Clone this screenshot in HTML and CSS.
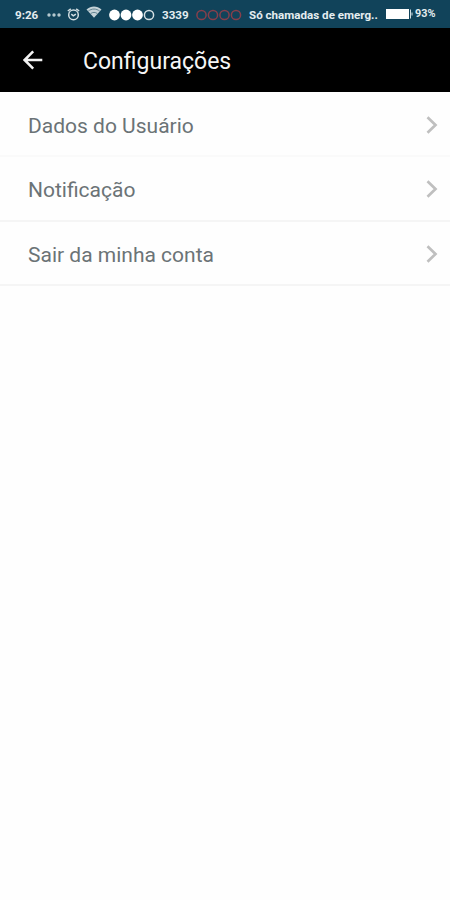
FILE: index.html
```html
<!DOCTYPE html>
<html lang="pt-BR">
<head>
  <meta charset="UTF-8">
  <meta name="viewport" content="width=device-width, initial-scale=1">
  <title>Configurações</title>
  <link rel="stylesheet" href="styles.css">
</head>
<body>
  <div class="status-bar">
    <span class="time">9:26</span>
    <svg class="more" width="14" height="4" viewBox="0 0 14 4">
      <circle cx="2" cy="2" r="1.7"/><circle cx="7" cy="2" r="1.7"/><circle cx="12" cy="2" r="1.7"/>
    </svg>
    <svg class="alarm" width="13" height="13" viewBox="0 0 13 13">
      <circle cx="6.5" cy="6.9" r="4.8"/>
      <path d="M4.3 6.2l2 1.6 2.6-1.6M0.8 3l3-2.2M12.2 3l-3-2.2"/>
    </svg>
    <svg class="wifi" width="16" height="12" viewBox="0 0 16 12">
      <path class="wifi-fill" d="M8 11.8L0.5 3.5C5 -0.4 11 -0.4 15.5 3.5z"/>
      <path class="wifi-gap" d="M2.2 5.2C5.8 2.3 10.2 2.3 13.8 5.2M4.6 7.6C6.7 6 9.3 6 11.4 7.6"/>
    </svg>
    <svg class="dots" width="46" height="12" viewBox="0 0 46 12">
      <circle class="on" cx="5.5" cy="6" r="5.4"/>
      <circle class="on" cx="17" cy="6" r="5.4"/>
      <circle class="on" cx="28.5" cy="6" r="5.4"/>
      <circle class="off" cx="40" cy="6" r="4.6"/>
    </svg>
    <span class="carrier">3339</span>
    <svg class="dots red" width="46" height="12" viewBox="0 0 46 12">
      <circle class="off" cx="5.5" cy="6" r="4.6"/>
      <circle class="off" cx="17" cy="6" r="4.6"/>
      <circle class="off" cx="28.5" cy="6" r="4.6"/>
      <circle class="off" cx="40" cy="6" r="4.6"/>
    </svg>
    <span class="emergency">Só chamadas de emerg..</span>
    <svg class="battery" width="27" height="10" viewBox="0 0 27 10">
      <rect x="0" y="0" width="23" height="10"/>
      <path d="M24.5 0.5v9M26 3.5v3"/>
    </svg>
    <span class="percent">93%</span>
  </div>

  <header class="header">
    <button class="back" aria-label="Voltar">
      <svg width="20" height="20" viewBox="0 0 20 20">
        <path d="M19.3 10H1.8M10.2 1.4L1.6 10l8.6 8.6"/>
      </svg>
    </button>
    <h1>Configurações</h1>
  </header>

  <ul class="menu">
    <li>
      <span>Dados do Usuário</span>
      <svg class="chevron" width="12" height="18" viewBox="0 0 12 18"><path d="M1.5 1.3L9.5 9l-8 7.7"/></svg>
    </li>
    <li>
      <span>Notificação</span>
      <svg class="chevron" width="12" height="18" viewBox="0 0 12 18"><path d="M1.5 1.3L9.5 9l-8 7.7"/></svg>
    </li>
    <li>
      <span>Sair da minha conta</span>
      <svg class="chevron" width="12" height="18" viewBox="0 0 12 18"><path d="M1.5 1.3L9.5 9l-8 7.7"/></svg>
    </li>
  </ul>
</body>
</html>
```

FILE: styles.css
```css
body {
  font-family: Roboto, sans-serif;
  margin: 0;
  background-color: #fefefe;
}
svg {
  display: block;
  flex-shrink: 0;
  fill: none;
}
.status-bar {
  display: flex;
  align-items: center;
  box-sizing: border-box;
  height: 28px;
  padding-left: 15px;
  background-color: #11435a;
  color: #e4edf0;
  font-size: 11.6px;
  font-weight: bold;
  white-space: nowrap;
}
.status-bar span {
  flex-shrink: 0;
  line-height: 14px;
  padding-top: 2px;
}
.time {
  width: 32px;
}
.more {
  margin: 1px 6px 0 0;
  fill: #b5c8cf;
}
.alarm {
  margin-right: 6px;
  stroke: #d3dfe3;
  stroke-width: 1.5;
}
.wifi {
  margin: 0 7px 4px 0;
}
.wifi-fill {
  fill: #c5d3d8;
}
.wifi-gap {
  stroke: #4a7080;
  stroke-width: 0.8;
}
.dots {
  margin: 1px 7px 0 0;
}
.dots .on {
  fill: #fff;
}
.dots .off {
  stroke: #d3dfe3;
  stroke-width: 1.5;
}
.dots.red .off {
  stroke: #873f4b;
}
.carrier {
  width: 34px;
}
.emergency {
  width: 137px;
}
.battery {
  margin-right: 2px;
  stroke: #d3dfe3;
}
.battery rect {
  fill: #fff;
  stroke: none;
}
.status-bar .percent {
  padding-top: 0;
  font-size: 10.8px;
}
.header {
  display: flex;
  align-items: center;
  height: 64px;
  padding-left: 23px;
  background-color: #000;
}
.back {
  width: 60px;
  padding: 0;
  border: none;
  background: none;
  cursor: pointer;
}
.back path {
  stroke: #f2f2f2;
  stroke-width: 2.5;
}
.header h1 {
  margin: 2px 0 0;
  color: #f5f5f5;
  font-size: 23px;
  font-weight: normal;
}
.menu {
  margin: 0;
  padding: 0;
  list-style: none;
}
.menu li {
  display: flex;
  align-items: center;
  justify-content: space-between;
  box-sizing: border-box;
  height: 64.5px;
  padding: 2px 12px 0 28px;
  border-bottom: 2px solid #f5f5f5;
  color: #6b7376;
  font-size: 21px;
}
.menu li:first-child {
  height: 65px;
  border-bottom-color: #fafafa;
}
.menu span {
  padding-top: 2px;
}
.chevron path {
  stroke: #bfbfbf;
  stroke-width: 2.7;
}
```
